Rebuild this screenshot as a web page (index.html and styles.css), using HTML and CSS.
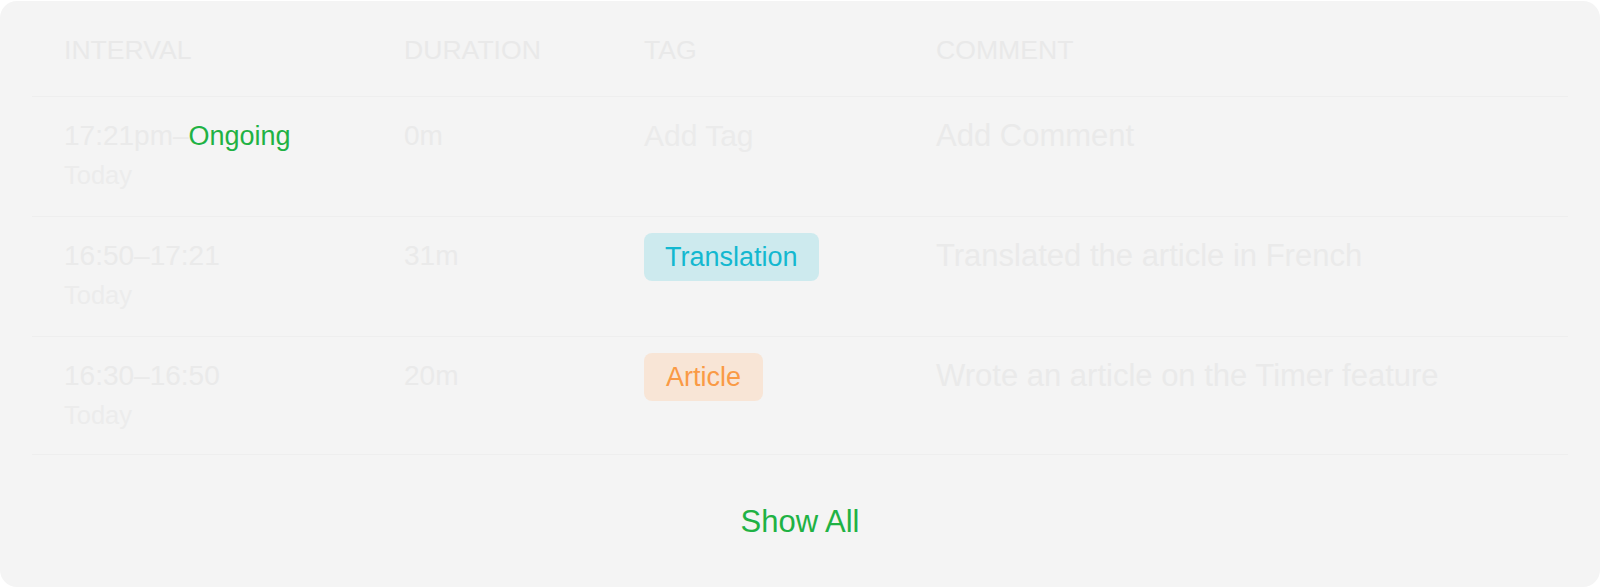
FILE: index.html
```html
<!DOCTYPE html>
<html lang="en">
<head>
<meta charset="utf-8">
<title>Time entries</title>
<link rel="stylesheet" href="styles.css">
</head>
<body>
<div class="card">
  <div class="table">
    <div class="row head">
      <div class="cell">INTERVAL</div>
      <div class="cell">DURATION</div>
      <div class="cell">TAG</div>
      <div class="cell">COMMENT</div>
    </div>
    <div class="row">
      <div class="cell">
        <div class="main">17:21pm–<span class="ongoing">Ongoing</span></div>
        <div class="sub">Today</div>
      </div>
      <div class="cell"><div class="main">0m</div></div>
      <div class="cell"><div class="placeholder">Add Tag</div></div>
      <div class="cell"><div class="comment">Add Comment</div></div>
    </div>
    <div class="row">
      <div class="cell">
        <div class="main">16:50–17:21</div>
        <div class="sub">Today</div>
      </div>
      <div class="cell"><div class="main">31m</div></div>
      <div class="cell"><span class="pill pill-teal">Translation</span></div>
      <div class="cell"><div class="comment">Translated the article in French</div></div>
    </div>
    <div class="row last">
      <div class="cell">
        <div class="main">16:30–16:50</div>
        <div class="sub">Today</div>
      </div>
      <div class="cell"><div class="main">20m</div></div>
      <div class="cell"><span class="pill pill-orange">Article</span></div>
      <div class="cell"><div class="comment">Wrote an article on the Timer feature</div></div>
    </div>
  </div>
  <div class="footer"><span class="show-all">Show All</span></div>
</div>
</body>
</html>
```

FILE: styles.css
```css
html, body {
  margin: 0;
  padding: 0;
  background: #ffffff;
}

body {
  font-family: "Liberation Sans", Arial, sans-serif;
}

.card {
  margin-top: 1px;
  height: 586px;
  box-sizing: border-box;
  background: #f4f4f4;
  border-radius: 17px;
  padding: 0 32px;
  overflow: hidden;
}

.table {
  display: flex;
  flex-direction: column;
}

.row {
  display: grid;
  grid-template-columns: 340px 240px 292px 1fr;
  align-items: start;
  padding: 19px 0 22px;
  border-bottom: 1px solid #eeeeee;
}

.row.last {
  padding-bottom: 20px;
}

.row.head {
  padding: 33px 0 30px;
}

.cell {
  padding-left: 32px;
}

.head .cell {
  font-size: 26.6px;
  line-height: 32px;
  color: #e9e9e9;
}

.main {
  font-size: 28px;
  line-height: 40px;
  color: #eaeaea;
}

.placeholder {
  font-size: 30px;
  line-height: 40px;
  color: #ebebeb;
}

.sub {
  font-size: 25.5px;
  line-height: 38px;
  color: #ececec;
}

.comment {
  font-size: 31px;
  line-height: 40px;
  color: #eaeaea;
}

.ongoing {
  font-size: 27px;
  color: #1fb244;
}

.pill {
  display: inline-flex;
  align-items: center;
  height: 48px;
  margin-top: -3px;
  padding: 0 21px;
  border-radius: 8px;
  font-size: 27px;
}

.pill-teal {
  background: #cdeaee;
  color: #13b8d0;
}

.pill-orange {
  background: #f8e5d6;
  color: #fa9a45;
  padding: 0 22px;
}

.footer {
  display: flex;
  justify-content: center;
  margin-top: 47px;
}

.show-all {
  font-size: 31px;
  line-height: 40px;
  color: #1fb244;
}
```
